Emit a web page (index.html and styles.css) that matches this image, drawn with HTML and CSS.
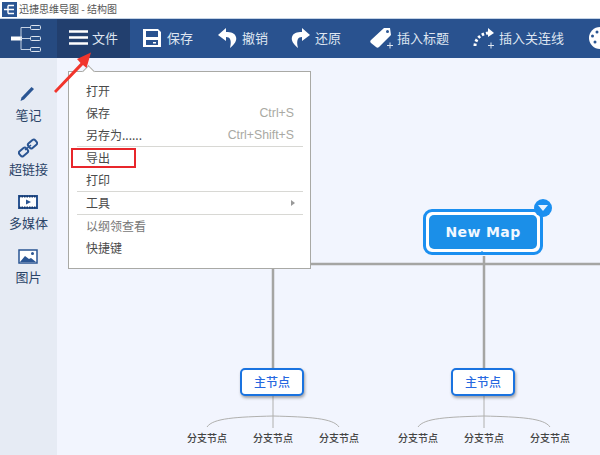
FILE: index.html
```html
<!DOCTYPE html>
<html lang="zh">
<head>
<meta charset="utf-8">
<title>迅捷思维导图 - 结构图</title>
<link rel="stylesheet" href="styles.css">
</head>
<body>
<div class="app">
  <header class="titlebar">
    <svg class="app-icon" width="15" height="15" viewBox="0 0 15 15"><rect width="15" height="15" fill="#2a5593"/><path d="M2 7.500h4M6 3.500v8M6 3.500h6M6 7.500h6M6 11.500h6" stroke="#fff" stroke-width="1.400" fill="none"/></svg>
    <span class="app-title">迅捷思维导图 - 结构图</span>
  </header>
  <nav class="toolbar">
    <div class="tool-logo">
      <svg width="32" height="30" viewBox="0 0 32 30"><path d="M0 14.500h11" stroke="#fff" stroke-width="4"/><path d="M10 14.500h10M10 3.500v22M10 3.500h10M10 25.500h10" stroke="#c5d2e4" stroke-width="1" fill="none"/><g fill="#2b5186" stroke="#dce4ef"><rect x="19.500" y="1.500" width="10" height="4" rx="1"/><rect x="19.500" y="12.500" width="10" height="4" rx="1"/><rect x="19.500" y="23.500" width="10" height="4" rx="1"/></g></svg>
    </div>
    <div class="tool tool-file">
      <svg width="19" height="15" viewBox="0 0 19 15"><path d="M0 1.500h19M0 7.500h19M0 13.500h19" stroke="#fff" stroke-width="2.400"/></svg>
      <span>文件</span>
    </div>
    <div class="tool tool-save">
      <svg width="18" height="20" viewBox="0 0 18 20"><path fill-rule="evenodd" d="M0 1h15l3 3v15H0zM3 3v6h12V3zM3 12v5h12v-5z" fill="#fff"/><rect x="10" y="14" width="3" height="1.500" fill="#fff"/></svg>
      <span>保存</span>
    </div>
    <div class="tool tool-undo">
      <svg width="19" height="20" viewBox="0 0 19 20"><path d="M8 0 0 7l8 6V9c4 0 6 3 4 11 5-4 7-8 6-11-1-4-5-5-10-5z" fill="#fff"/></svg>
      <span>撤销</span>
    </div>
    <div class="tool tool-redo">
      <svg width="19" height="20" viewBox="0 0 19 20"><path d="M11 0l8 7-8 6V9C7 9 5 12 7 20 2 16 0 12 1 9c1-4 5-5 10-5z" fill="#fff"/></svg>
      <span>还原</span>
    </div>
    <div class="tool tool-title">
      <svg width="24" height="22" viewBox="0 0 24 22"><path d="M14 1h6l1 7L9 20c-1 1-2 1-3 0l-5-4c-1-1-1-2 0-3z" fill="#fff"/><circle cx="17.500" cy="4.500" r="1.500" fill="#2a5593"/><path d="M17 18.500h6M20 15.500v6" stroke="#dfe6f1"/></svg>
      <span>插入标题</span>
    </div>
    <div class="tool tool-link">
      <svg width="24" height="22" viewBox="0 0 24 22"><path d="M2 19c0-6 5-12 13-13" fill="none" stroke="#fff" stroke-width="3" stroke-dasharray="2.500 2"/><path d="M15 1l6 5-6 4z" fill="#fff"/><path d="M15 18.500h6M18 15.500v6" stroke="#dfe6f1"/></svg>
      <span>插入关连线</span>
    </div>
    <div class="tool tool-palette">
      <svg width="11" height="22" viewBox="0 0 11 22"><circle cx="11" cy="11" r="11" fill="#fff"/><g fill="#2a5593"><circle cx="3.500" cy="9" r="1.500"/><circle cx="8" cy="5" r="1.500"/><circle cx="6" cy="15" r="1.500"/></g></svg>
    </div>
  </nav>
  <div class="workspace">
    <aside class="sidebar">
      <div class="side-item">
        <svg width="20" height="22" viewBox="0 0 20 22"><path d="M13.500 4l2.500 2L6 16.500 2.500 18l1-3.500z" fill="#2a5593"/></svg>
        <span>笔记</span>
      </div>
      <div class="side-item">
        <svg width="20" height="22" viewBox="0 0 20 22"><g fill="none" stroke="#2a5593" stroke-width="2"><rect x="10" y="4" width="9" height="6" rx="2" transform="rotate(-40 14.500 7)"/><rect x="1" y="12" width="9" height="6" rx="2" transform="rotate(-40 5.500 15)"/></g><path d="M7 13l6-5" stroke="#2a5593" stroke-width="1.600"/></svg>
        <span>超链接</span>
      </div>
      <div class="side-item">
        <svg width="20" height="22" viewBox="0 0 20 22"><rect x="1" y="5" width="18" height="12" fill="#fff" stroke="#2a5593" stroke-width="2"/><path d="M1 5.500h18M1 16.500h18" stroke="#17386b" stroke-width="2" stroke-dasharray="1.500 1"/><path d="M8 8.500l5 2.500-5 2.500z" fill="#2a5593"/></svg>
        <span>多媒体</span>
      </div>
      <div class="side-item">
        <svg width="20" height="22" viewBox="0 0 20 22"><rect x="1" y="5" width="18" height="13" fill="#fff" stroke="#2a5593" stroke-width="1.500"/><path d="M2 17l5-6 4 3 2-1 5 4z" fill="#2a5593"/><circle cx="14.500" cy="8.500" r="1.500" fill="#2a5593"/></svg>
        <span>图片</span>
      </div>
    </aside>
    <main class="canvas">
      <svg class="links" width="543" height="398" viewBox="0 0 543 398">
        <g fill="none" stroke="#a5a5a3" stroke-width="2.500">
          <path d="M250 206h293M216 208v104M427 198v114"/>
        </g>
        <g fill="none" stroke="#b0b0ae" stroke-width="1">
          <path d="M216 338v32M427 338v32"/>
          <path d="M150 369c6-9 30-10 66-11 36 1 60 2 66 11"/>
          <path d="M361 369c6-9 30-10 66-11 36 1 60 2 66 11"/>
        </g>
      </svg>
      <div class="central-node">
        <div class="central-inner">New Map</div>
        <span class="central-badge"></span>
      </div>
      <div class="main-node main-a">主节点</div>
      <div class="main-node main-b">主节点</div>
      <span class="leaf leaf-1">分支节点</span>
      <span class="leaf leaf-2">分支节点</span>
      <span class="leaf leaf-3">分支节点</span>
      <span class="leaf leaf-4">分支节点</span>
      <span class="leaf leaf-5">分支节点</span>
      <span class="leaf leaf-6">分支节点</span>
    </main>
  </div>
  <div class="menu">
    <span class="menu-notch"></span>
    <div class="menu-row"><span>打开</span></div>
    <div class="menu-row"><span>保存</span><span class="shortcut">Ctrl+S</span></div>
    <div class="menu-row"><span>另存为......</span><span class="shortcut">Ctrl+Shift+S</span></div>
    <div class="menu-sep"></div>
    <div class="menu-row menu-row-export"><span>导出</span><span class="export-box"></span></div>
    <div class="menu-row"><span>打印</span></div>
    <div class="menu-sep"></div>
    <div class="menu-row"><span>工具</span><span class="submenu-arrow"></span></div>
    <div class="menu-sep"></div>
    <div class="menu-row menu-muted"><span>以纲领查看</span></div>
    <div class="menu-row"><span>快捷键</span></div>
  </div>
  <svg class="arrow" width="42" height="44" viewBox="0 0 42 44"><path d="M1 41 27.500 13 24 9 38 2.500 33.500 18 30 15 3 43z" fill="#f1352c"/></svg>
</div>
</body>
</html>
```
FILE: styles.css
```css
* { box-sizing: border-box; }
html, body { margin: 0; padding: 0; }
body {
  width: 600px;
  height: 455px;
  overflow: hidden;
  font-family: "Noto Sans CJK SC", "Liberation Sans", sans-serif;
  background: #f2f5fe;
}
.app { position: relative; width: 600px; height: 455px; display: flex; flex-direction: column; overflow: hidden; }

.titlebar { height: 18px; background: #fff; display: flex; align-items: center; gap: 2px; padding-left: 2px; }
.app-icon { flex: none; }
.app-title { font-size: 10px; color: #555; line-height: 18px; white-space: nowrap; }

.toolbar { height: 40px; background: #29528f; border-top: 1px solid #c4d3e6; display: flex; align-items: stretch; color: #dfe6f1; font-size: 13px; white-space: nowrap; }
.tool-logo { width: 57px; background: #264a80; display: flex; align-items: center; padding-left: 11px; }
.tool { display: flex; align-items: center; padding-bottom: 2px; }
.tool-file { width: 73px; background: #223f6e; padding-left: 12px; gap: 4px; }
.tool-save { padding-left: 13px; width: 88px; gap: 6px; }
.tool-undo { width: 73px; gap: 5px; }
.tool-redo { width: 79px; gap: 5px; }
.tool-title { width: 103px; gap: 3px; }
.tool-link { width: 116px; gap: 2px; }
.tool-palette { flex: 1; }

.workspace { flex: 1; display: flex; min-height: 0; }
.sidebar { width: 57px; background: #e6ebf4; display: flex; flex-direction: column; align-items: center; padding-top: 25px; color: #2b4468; font-size: 13px; }
.side-item { display: flex; flex-direction: column; align-items: center; line-height: 19px; height: 54px; white-space: nowrap; }
.side-item svg { flex: none; }

.canvas { position: relative; flex: 1; background: #f2f5fe; }
.links { position: absolute; left: 0; top: 0; }
.central-node { position: absolute; left: 366px; top: 151px; width: 120px; height: 46px; padding: 3px; border-radius: 9px; background: #fff; border: 3px solid #1b8ff0; }
.central-node::after { content: ""; position: absolute; left: 51px; bottom: -3px; width: 0; height: 0; border-left: 5px solid transparent; border-right: 5px solid transparent; border-bottom: 4px solid #1b8ff0; }
.central-inner { height: 100%; border-radius: 5px; background: #1b8fe8; color: #f2f8ff; font: bold 14px/34px "DejaVu Sans", sans-serif; letter-spacing: .4px; text-align: center; }
.central-badge { position: absolute; right: -12px; top: -13px; width: 18px; height: 18px; border-radius: 50%; background: #1b8ff0; }
.central-badge::after { content: ""; position: absolute; left: 4px; top: 6px; border-left: 5px solid transparent; border-right: 5px solid transparent; border-top: 6px solid #e8f3ff; }
.main-node { position: absolute; top: 310px; width: 64px; height: 28px; background: #fff; border: 2px solid #1a73e0; border-radius: 5px; box-shadow: 1px 2px 3px rgba(60,60,60,.45); color: #2668e0; font-size: 12px; font-weight: 500; line-height: 24px; text-align: center; }
.main-a { left: 183px; }
.main-b { left: 394px; }
.leaf { position: absolute; top: 372px; width: 44px; text-align: center; font-size: 10px; font-weight: 500; line-height: 15px; color: #444; white-space: nowrap; }
.leaf-1 { left: 128px; }
.leaf-2 { left: 194px; }
.leaf-3 { left: 260px; }
.leaf-4 { left: 339px; }
.leaf-5 { left: 405px; }
.leaf-6 { left: 471px; }

.menu { position: absolute; left: 68px; top: 71px; width: 243px; height: 198px; background: #fff; border: 1px solid #a9a9a5; padding: 8px 7px 0 8px; font-size: 12px; color: #4a4a4a; }
.menu-notch { position: absolute; left: 15px; top: -5px; width: 9px; height: 9px; background: #fff; border-left: 1px solid #a9a9a5; border-top: 1px solid #a9a9a5; transform: rotate(45deg); }
.menu-row { position: relative; display: flex; justify-content: space-between; align-items: center; height: 22px; padding: 0 9px 0 9px; }
.menu-row span:first-child { position: relative; top: -1px; }
.menu-muted { color: #777; }
.menu-sep { height: 1px; background: #d8d8d4; }
.shortcut { color: #a9a9a3; font-family: "Liberation Sans", sans-serif; font-size: 12.300px; }
.submenu-arrow { border-left: 4px solid #999; border-top: 3.500px solid transparent; border-bottom: 3.500px solid transparent; margin-right: -1px; }
.export-box { position: absolute; left: -6px; top: 1px; width: 65px; height: 20px; border: 2px solid #e8262b; }
.arrow { position: absolute; left: 53px; top: 50px; }
```
